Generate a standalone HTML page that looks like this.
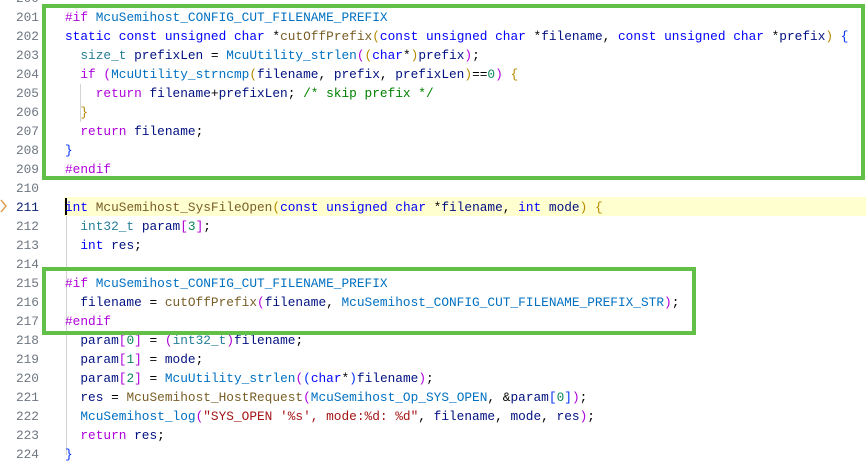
<!DOCTYPE html>
<html><head><meta charset="utf-8"><style>
html,body{margin:0;padding:0;background:#fff;width:866px;height:466px;overflow:hidden;position:relative}
.l{position:absolute;left:0;height:19px;line-height:19px;width:866px;font-family:"Liberation Mono",monospace;font-size:12.8px;white-space:pre;color:#000}
.n{position:absolute;left:0;width:39px;text-align:right;color:#6e7681}
.c{position:absolute;left:65px}
.k{color:#0000ff}.p{color:#af00db}.f{color:#795e26}.m{color:#0070c1}.v{color:#001080}.t{color:#267f99}.d{color:#098658}.s{color:#a31515}.g{color:#008000}.b1{color:#b58900}.b2{color:#af00db}.b3{color:#0431fa}
.box{position:absolute;border:4px solid #62bf47;box-sizing:border-box}
.guide{position:absolute;width:1px;background:#d3d3d3}
</style></head><body>
<div style="position:absolute;left:64px;top:197px;width:802px;height:19px;background:#ffffd0"></div>
<div class="guide" style="left:66px;top:216px;height:239px"></div>
<div class="guide" style="left:80px;top:84px;height:38px"></div>
<div class="guide" style="left:66px;top:294px;height:19px"></div>
<div style="position:absolute;left:65px;top:198px;width:2px;height:17px;background:#000"></div>
<svg style="position:absolute;left:0;top:199px" width="8" height="14"><path d="M1 1 L6 7 L1 13" fill="none" stroke="#e0a050" stroke-width="1.5"/></svg>

<div class="l" style="top:-11px"><span class="n">200</span></div>
<div class="l" style="top:8px"><span class="n">201</span><span class="c"><span class="p">#if</span> <span class="m">McuSemihost_CONFIG_CUT_FILENAME_PREFIX</span></span></div>
<div class="l" style="top:27px"><span class="n">202</span><span class="c"><span class="k">static</span> <span class="k">const</span> <span class="k">unsigned</span> <span class="k">char</span> *<span class="f">cutOffPrefix</span><span class="b1">(</span><span class="k">const</span> <span class="k">unsigned</span> <span class="k">char</span> *<span class="v">filename</span>, <span class="k">const</span> <span class="k">unsigned</span> <span class="k">char</span> *<span class="v">prefix</span><span class="b1">)</span> <span class="b3">{</span></span></div>
<div class="l" style="top:46px"><span class="n">203</span><span class="c">  <span class="t">size_t</span> <span class="v">prefixLen</span> = <span class="m">McuUtility_strlen</span><span class="b2">(</span><span class="b1">(</span><span class="k">char</span>*<span class="b1">)</span><span class="v">prefix</span><span class="b2">)</span>;</span></div>
<div class="l" style="top:65px"><span class="n">204</span><span class="c">  <span class="p">if</span> <span class="b2">(</span><span class="m">McuUtility_strncmp</span><span class="b1">(</span><span class="v">filename</span>, <span class="v">prefix</span>, <span class="v">prefixLen</span><span class="b1">)</span>==<span class="d">0</span><span class="b2">)</span> <span class="b1">{</span></span></div>
<div class="l" style="top:84px"><span class="n">205</span><span class="c">    <span class="p">return</span> <span class="v">filename</span>+<span class="v">prefixLen</span>; <span class="g">/* skip prefix */</span></span></div>
<div class="l" style="top:103px"><span class="n">206</span><span class="c">  <span class="b1">}</span></span></div>
<div class="l" style="top:122px"><span class="n">207</span><span class="c">  <span class="p">return</span> <span class="v">filename</span>;</span></div>
<div class="l" style="top:141px"><span class="n">208</span><span class="c"><span class="b3">}</span></span></div>
<div class="l" style="top:160px"><span class="n">209</span><span class="c"><span class="p">#endif</span></span></div>
<div class="l" style="top:179px"><span class="n">210</span></div>
<div class="l" style="top:198px"><span class="n" style="color:#0b216f">211</span><span class="c"><span class="k">int</span> <span class="f">McuSemihost_SysFileOpen</span><span class="b1">(</span><span class="k">const</span> <span class="k">unsigned</span> <span class="k">char</span> *<span class="v">filename</span>, <span class="k">int</span> <span class="v">mode</span><span class="b1">)</span> <span class="b1">{</span></span></div>
<div class="l" style="top:217px"><span class="n">212</span><span class="c">  <span class="t">int32_t</span> <span class="v">param</span><span class="b2">[</span><span class="d">3</span><span class="b2">]</span>;</span></div>
<div class="l" style="top:236px"><span class="n">213</span><span class="c">  <span class="k">int</span> <span class="v">res</span>;</span></div>
<div class="l" style="top:255px"><span class="n">214</span></div>
<div class="l" style="top:274px"><span class="n">215</span><span class="c"><span class="p">#if</span> <span class="m">McuSemihost_CONFIG_CUT_FILENAME_PREFIX</span></span></div>
<div class="l" style="top:293px"><span class="n">216</span><span class="c">  <span class="v">filename</span> = <span class="f">cutOffPrefix</span><span class="b2">(</span><span class="v">filename</span>, <span class="m">McuSemihost_CONFIG_CUT_FILENAME_PREFIX_STR</span><span class="b2">)</span>;</span></div>
<div class="l" style="top:312px"><span class="n">217</span><span class="c"><span class="p">#endif</span></span></div>
<div class="l" style="top:331px"><span class="n">218</span><span class="c">  <span class="v">param</span><span class="b2">[</span><span class="d">0</span><span class="b2">]</span> = <span class="b2">(</span><span class="t">int32_t</span><span class="b2">)</span><span class="v">filename</span>;</span></div>
<div class="l" style="top:350px"><span class="n">219</span><span class="c">  <span class="v">param</span><span class="b2">[</span><span class="d">1</span><span class="b2">]</span> = <span class="v">mode</span>;</span></div>
<div class="l" style="top:369px"><span class="n">220</span><span class="c">  <span class="v">param</span><span class="b2">[</span><span class="d">2</span><span class="b2">]</span> = <span class="m">McuUtility_strlen</span><span class="b2">(</span><span class="b3">(</span><span class="k">char</span>*<span class="b3">)</span><span class="v">filename</span><span class="b2">)</span>;</span></div>
<div class="l" style="top:388px"><span class="n">221</span><span class="c">  <span class="v">res</span> = <span class="f">McuSemihost_HostRequest</span><span class="b2">(</span><span class="m">McuSemihost_Op_SYS_OPEN</span>, &amp;<span class="v">param</span><span class="b3">[</span><span class="d">0</span><span class="b3">]</span><span class="b2">)</span>;</span></div>
<div class="l" style="top:407px"><span class="n">222</span><span class="c">  <span class="m">McuSemihost_log</span><span class="b2">(</span><span class="s">"SYS_OPEN '%s', mode:%d: %d"</span>, <span class="v">filename</span>, <span class="v">mode</span>, <span class="v">res</span><span class="b2">)</span>;</span></div>
<div class="l" style="top:426px"><span class="n">223</span><span class="c">  <span class="p">return</span> <span class="v">res</span>;</span></div>
<div class="l" style="top:445px"><span class="n">224</span><span class="c"><span class="b3">}</span></span></div>

<div class="box" style="left:42px;top:4px;width:823px;height:176px"></div>
<div class="box" style="left:42px;top:267px;width:654px;height:68px"></div>
</body></html>
